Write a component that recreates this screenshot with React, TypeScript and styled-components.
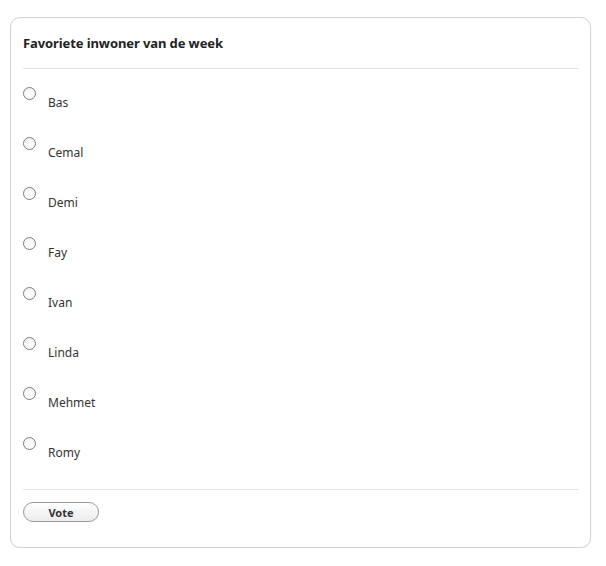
import React from 'react';
import styled, { createGlobalStyle } from 'styled-components';

const Global = createGlobalStyle`
    body {
        margin: 0;
        background: #fff;
        font-family: "Noto Sans", "Liberation Sans", sans-serif;
    }
`;

const Card = styled.form`
    box-sizing: border-box;
    width: 581px;
    height: 531px;
    margin: 17px 0 0 10px;
    padding: 0 12px;
    border: 1px solid #d2d2d2;
    border-radius: 10px;
    box-shadow: 0 1px 1px rgba(0,0,0,.06);
    background: #fff;
`;

const Header = styled.div`
    height: 50px;
    display: flex;
    align-items: center;
    border-bottom: 1px solid #e2e2e2;
    font-size: 13px;
    font-weight: 700;
    color: #222;
    letter-spacing: -0.1px;
`;

const Options = styled.ul`
    list-style: none;
    margin: 0;
    padding: 18px 0 2px;
    border-bottom: 1px solid #e2e2e2;
`;

const Option = styled.li`
    height: 50px;
    display: flex;
    align-items: flex-start;
    gap: 12px;
`;

const Radio = styled.input.attrs({ type: 'radio' })`
    appearance: none;
    box-sizing: border-box;
    width: 13px;
    height: 13px;
    margin: 0;
    border: 1px solid #7a7a7a;
    border-radius: 50%;
    background: linear-gradient(#f4f4f4, #fff);
    flex-shrink: 0;
`;

const Label = styled.label`
    margin-top: 8px;
    font-size: 12px;
    line-height: 16px;
    color: #333;
`;

const Footer = styled.div`
    display: flex;
    padding-top: 12px;
`;

const VoteButton = styled.button`
    box-sizing: border-box;
    width: 76px;
    height: 20px;
    padding: 0;
    border: 1px solid #9a9a9a;
    border-radius: 10px;
    background: linear-gradient(#fff, #ececec);
    font-family: inherit;
    font-size: 11px;
    font-weight: 700;
    color: #333;
    cursor: pointer;
`;

const names = ['Bas', 'Cemal', 'Demi', 'Fay', 'Ivan', 'Linda', 'Mehmet', 'Romy'];

const App = () => (
    <>
        <Global/>
        <Card onSubmit={e => e.preventDefault()}>
            <Header>Favoriete inwoner van de week</Header>
            <Options>
                {names.map(name => (
                    <Option key={name}>
                        <Radio name="inwoner" id={`opt-${name}`} value={name}/>
                        <Label htmlFor={`opt-${name}`}>{name}</Label>
                    </Option>
                ))}
            </Options>
            <Footer>
                <VoteButton type="submit">Vote</VoteButton>
            </Footer>
        </Card>
    </>
);

export default App;
